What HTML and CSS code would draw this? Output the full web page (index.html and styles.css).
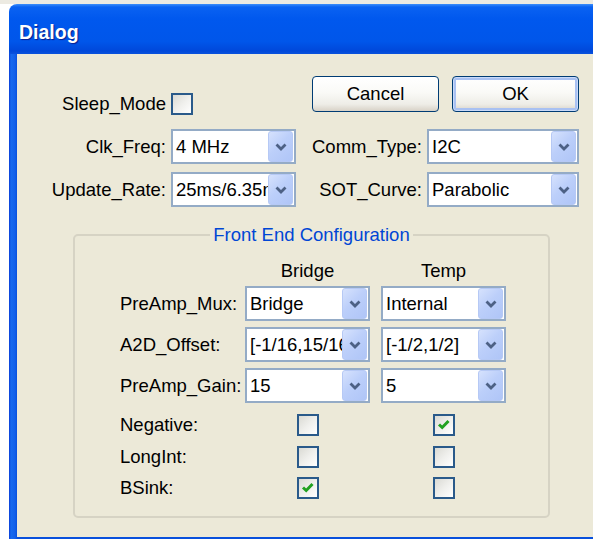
FILE: index.html
```html
<!DOCTYPE html>
<html lang="en">
<head>
<meta charset="utf-8">
<title>Dialog</title>
<link rel="stylesheet" href="styles.css">
</head>
<body>
<div class="window">
  <div class="titlebar"><span class="title">Dialog</span></div>
  <div class="frame">
    <div class="client">
      <div class="top">
        <span class="lbl sleep">Sleep_Mode</span>
        <span class="check sleep-box"></span>
        <div class="buttons">
          <button class="btn">Cancel</button>
          <button class="btn default">OK</button>
        </div>

        <span class="lbl">Clk_Freq:</span>
        <div class="combo"><span class="val">4 MHz</span><span class="drop"><svg viewBox="0 0 12 8" width="12" height="8"><path d="M1.5 1.5 L6 6 L10.5 1.5"/></svg></span></div>
        <span class="lbl">Comm_Type:</span>
        <div class="combo"><span class="val">I2C</span><span class="drop"><svg viewBox="0 0 12 8" width="12" height="8"><path d="M1.5 1.5 L6 6 L10.5 1.5"/></svg></span></div>

        <span class="lbl">Update_Rate:</span>
        <div class="combo"><span class="val">25ms/6.35ms</span><span class="drop"><svg viewBox="0 0 12 8" width="12" height="8"><path d="M1.5 1.5 L6 6 L10.5 1.5"/></svg></span></div>
        <span class="lbl">SOT_Curve:</span>
        <div class="combo"><span class="val">Parabolic</span><span class="drop"><svg viewBox="0 0 12 8" width="12" height="8"><path d="M1.5 1.5 L6 6 L10.5 1.5"/></svg></span></div>
      </div>

      <fieldset class="group">
        <legend>Front End Configuration</legend>
        <div class="grid">
          <span></span>
          <span class="head">Bridge</span>
          <span class="head">Temp</span>

          <span class="g-lbl">PreAmp_Mux:</span>
          <div class="combo"><span class="val">Bridge</span><span class="drop"><svg viewBox="0 0 12 8" width="12" height="8"><path d="M1.5 1.5 L6 6 L10.5 1.5"/></svg></span></div>
          <div class="combo"><span class="val">Internal</span><span class="drop"><svg viewBox="0 0 12 8" width="12" height="8"><path d="M1.5 1.5 L6 6 L10.5 1.5"/></svg></span></div>

          <span class="g-lbl">A2D_Offset:</span>
          <div class="combo"><span class="val">[-1/16,15/16]</span><span class="drop"><svg viewBox="0 0 12 8" width="12" height="8"><path d="M1.5 1.5 L6 6 L10.5 1.5"/></svg></span></div>
          <div class="combo"><span class="val">[-1/2,1/2]</span><span class="drop"><svg viewBox="0 0 12 8" width="12" height="8"><path d="M1.5 1.5 L6 6 L10.5 1.5"/></svg></span></div>

          <span class="g-lbl">PreAmp_Gain:</span>
          <div class="combo"><span class="val">15</span><span class="drop"><svg viewBox="0 0 12 8" width="12" height="8"><path d="M1.5 1.5 L6 6 L10.5 1.5"/></svg></span></div>
          <div class="combo"><span class="val">5</span><span class="drop"><svg viewBox="0 0 12 8" width="12" height="8"><path d="M1.5 1.5 L6 6 L10.5 1.5"/></svg></span></div>

          <span class="g-lbl box-row">Negative:</span>
          <span class="check"></span>
          <span class="check on"><svg viewBox="0 0 18 18" width="18" height="18"><path d="M4 8.5 L7.2 11.5 L13.5 5"/></svg></span>

          <span class="g-lbl box-row">LongInt:</span>
          <span class="check"></span>
          <span class="check"></span>

          <span class="g-lbl box-row">BSink:</span>
          <span class="check on"><svg viewBox="0 0 18 18" width="18" height="18"><path d="M4 8.5 L7.2 11.5 L13.5 5"/></svg></span>
          <span class="check"></span>
        </div>
      </fieldset>
    </div>
  </div>
</div>
</body>
</html>
```

FILE: styles.css
```css
html, body {
  margin: 0;
  overflow: hidden;
}

body {
  background: linear-gradient(#ECEAE2 4px, #FFFFFF 4px);
  font-family: "Liberation Sans", Arial, sans-serif;
  font-size: 18.5px;
  color: #000;
}

.window {
  margin: 4px 0 0 9px;
  width: 620px;
}

/* Luna title bar */
.titlebar {
  height: 50px;
  box-sizing: border-box;
  padding: 16px 0 0 10px;
  border-radius: 8px 8px 0 0;
  background: linear-gradient(to bottom,
    #3C8EFA 0, #0A62F2 3px, #0058EE 30%, #0056EA 75%,
    #0048DA 94%, #0A52DC 100%);
}

.title {
  display: block;
  font-weight: bold;
  font-size: 19.5px;
  line-height: 24px;
  color: #FFFFFF;
  text-shadow: 1px 1px 1px #0A1E8C;
}

/* blue window frame on the left and bottom */
.frame {
  padding: 0 0 8px 8px;
  background: linear-gradient(to right, #0A3CD8 0, #166AEE 2px, #1260EA 6px, #0850DC 8px);
  background-color: #1260EA;
}

.client {
  background: #ECE9D8;
  padding: 22px 0 19px 0;
}

/* top controls */
.top {
  display: grid;
  grid-template-columns: 149px 125px 121px 152px;
  grid-template-rows: 45px 35px 35px;
  column-gap: 5px;
  row-gap: 8px;
}

.lbl {
  justify-self: end;
  align-self: center;
  white-space: nowrap;
  line-height: 22px;
}

.lbl.sleep,
.sleep-box {
  align-self: end;
  margin-bottom: 6px;
}

.buttons {
  grid-column: 3 / 5;
  display: flex;
  justify-content: flex-end;
  gap: 13px;
  align-self: start;
}

.btn {
  width: 127px;
  height: 36px;
  padding: 0;
  font-family: inherit;
  font-size: 18.5px;
  color: #000;
  border: 1px solid #003C74;
  border-radius: 4px;
  background: linear-gradient(to bottom, #FFFFFF 0%, #FAFAF7 45%, #EEEDE7 80%, #D8D2C7 100%);
}

.btn.default {
  box-shadow: inset 0 0 0 1px #C9DAF9, inset 0 0 0 3px #A9C1F2;
}

/* combo box */
.combo {
  display: flex;
  height: 35px;
  box-sizing: border-box;
  border: 2px solid #94ABC6;
  background: #FFFFFF;
  padding: 0 1px 0 0;
}

.combo .val {
  flex: 1;
  min-width: 0;
  overflow: hidden;
  white-space: nowrap;
  padding-left: 3px;
  line-height: 31px;
}

.drop {
  width: 25px;
  flex: none;
  display: flex;
  align-items: center;
  justify-content: center;
  box-sizing: border-box;
  border: 1px solid #B6C9F5;
  border-radius: 3px;
  background: linear-gradient(135deg, #D6E2FD 0%, #BCCFFA 45%, #AFC5F7 100%);
}

.drop svg path {
  fill: none;
  stroke: #4D6185;
  stroke-width: 2.8;
}

/* check box */
.check {
  width: 22px;
  height: 22px;
  box-sizing: border-box;
  border: 2px solid #2A5A8A;
  background: linear-gradient(135deg, #DADAD4 0%, #EFEFEC 50%, #FFFFFF 100%);
  display: flex;
  align-items: center;
  justify-content: center;
}

.check svg path {
  fill: none;
  stroke: #21A121;
  stroke-width: 3;
}

/* group box */
.group {
  margin: 17px 0 0 56px;
  width: 477px;
  box-sizing: border-box;
  border: 2px solid #D6D3C4;
  border-radius: 5px;
  padding: 14px 0 12px 0;
  min-width: 0;
}

.group legend {
  margin: 0 auto;
  padding: 0 3px;
  line-height: 22px;
  color: #0046D5;
}

.grid {
  display: grid;
  margin-left: 45px;
  grid-template-columns: 114px 125px 125px;
  grid-template-rows: 26px 41px 41px 41px 31.5px 31.5px 31.5px;
  column-gap: 11px;
  align-items: start;
}

.head {
  justify-self: center;
  line-height: 22px;
}

.g-lbl {
  white-space: nowrap;
  line-height: 35px;
}

.g-lbl.box-row {
  line-height: 22px;
  margin-top: 5px;
}

.grid .check {
  justify-self: center;
  margin-top: 5px;
}
```
